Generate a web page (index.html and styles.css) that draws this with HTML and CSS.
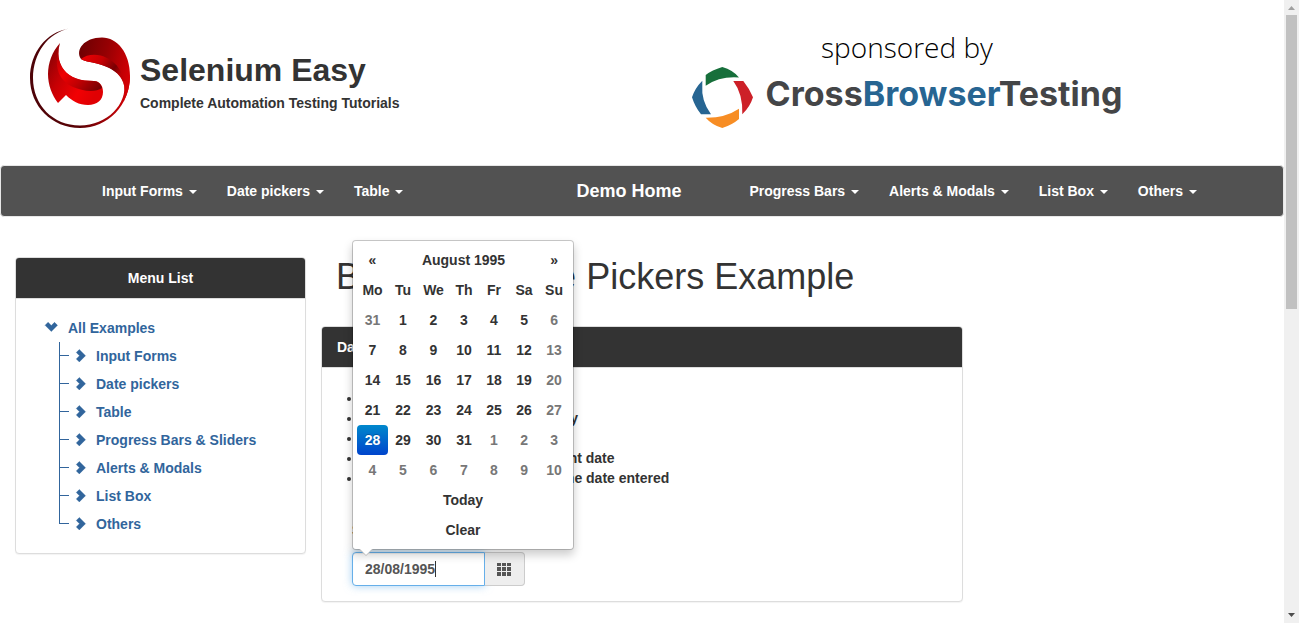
FILE: index.html
```html
<!DOCTYPE html>
<html lang="en">
<head>
<meta charset="utf-8">
<title>Selenium Easy - Bootstrap Date Pickers Example</title>
<link rel="stylesheet" href="styles.css">
</head>
<body>
<svg class="defs" width="0" height="0" aria-hidden="true">
  <symbol id="chevron" viewBox="0 0 14 14"><path d="M4.300 .5 10.500 6.700 4.300 12.900 1.300 9.900 4.500 6.700 1.300 3.500Z" fill="currentColor" stroke="currentColor" stroke-width=".4" stroke-linejoin="round"/></symbol>
</svg>
<div class="page">
  <header class="header">
    <a class="brand" href="#">
      <svg class="brand-logo" viewBox="0 0 100 100" aria-hidden="true">
        <defs>
          <linearGradient id="ring" x1="0" y1="0" x2="1" y2="0"><stop offset="0" stop-color="#4d0308"/><stop offset=".5" stop-color="#5a0205"/><stop offset=".85" stop-color="#b80206"/><stop offset="1" stop-color="#d40004"/></linearGradient>
          <linearGradient id="top" x1="0" y1=".2" x2="1" y2=".5"><stop offset="0" stop-color="#6e0002"/><stop offset=".5" stop-color="#960003"/><stop offset="1" stop-color="#d20004"/></linearGradient>
          <linearGradient id="fold" x1="0" y1="0" x2="1" y2=".5"><stop offset="0" stop-color="#ef0004"/><stop offset=".45" stop-color="#c80003"/><stop offset=".8" stop-color="#780003"/><stop offset="1" stop-color="#c00003"/></linearGradient>
          <linearGradient id="low" x1="0" y1="0" x2="1" y2=".6"><stop offset="0" stop-color="#7a0205"/><stop offset=".4" stop-color="#c60004"/><stop offset=".75" stop-color="#f20003"/><stop offset="1" stop-color="#e00003"/></linearGradient>
          <linearGradient id="lip" x1="0" y1="0" x2="1" y2="1"><stop offset="0" stop-color="#9a0003"/><stop offset=".4" stop-color="#f00003"/><stop offset=".65" stop-color="#c00003"/><stop offset="1" stop-color="#6a0003"/></linearGradient>
        </defs>
        <path fill="url(#ring)" d="M39 .4C16 4 0 25 0 50c0 28 22 50 50 50 28 0 50-23 50-52l-6 6c4 22-17 43.500-44 43.500C23 97.500 3 77 3 50 3 25 18 5 39 .4Z"/>
        <path fill="url(#top)" d="M51 31C45 22 54 9.500 72 9.500c15 0 28 15 28 38.500 0 9-2 17-6 25 1-7 1-13-1-20-5-12-21-17-33-19-4-.7-7-1.700-9-3Z"/>
        <path fill="url(#fold)" d="M51 31c6-5 17-6 26-1 10 5 17 15 17 27-4-15-19-20-34-23-4-.7-7-1.700-9-3Z"/>
        <path fill="url(#low)" d="M30 15c-8 9-12 20-12 31 0 11 4 21 10 29l8-8c6 6 13 10 22 10 9 0 15-5 15-13 0-7-4-11-9-11-13 0-24-3-30-11-6-8-7-17-4-27Z"/>
        <path fill="url(#lip)" d="M30 15c-3 10-2 19 4 27 6 8 17 11 30 11 4 0 7 3 8 7-7 5-20 3-29-1C30 53 22 40 30 15Z"/>
      </svg>
      <span class="brand-text">
        <span class="brand-name">Selenium Easy</span>
        <span class="brand-tag">Complete Automation Testing Tutorials</span>
      </span>
    </a>
    <a class="sponsor" href="#">
      <span class="sponsor-by">sponsored by</span>
      <span class="sponsor-row">
        <svg class="sponsor-logo" viewBox="0 0 61 61" aria-hidden="true">
          <path fill="#176f3b" d="M13.700 18.700V8Q20 3 30.300 0 41 3 47 10.500 28 9 13.700 18.700Z"/>
          <path fill="#cd2028" d="M41.300 14h10Q57 21 61 30.300 58 40 50.300 47.300 51 27 41.300 14Z"/>
          <path fill="#f78d24" d="M47 41.700V52Q40 58 30.300 61 20 58 13.700 50.700 33 51 47 41.700Z"/>
          <path fill="#276592" d="M10.300 13.700V18Q9 34 19 47.300H9Q3 40 0 30.300 3 21 10.300 13.700Z"/>
        </svg>
        <span class="sponsor-name">Cross<span class="sponsor-accent">Browser</span>Testing</span>
      </span>
    </a>
  </header>

  <nav class="navbar">
    <div class="nav-group">
      <a class="nav-link" href="#">Input Forms <span class="caret"></span></a>
      <a class="nav-link" href="#">Date pickers <span class="caret"></span></a>
      <a class="nav-link" href="#">Table <span class="caret"></span></a>
    </div>
    <a class="nav-link nav-home" href="#">Demo Home</a>
    <div class="nav-group">
      <a class="nav-link" href="#">Progress Bars <span class="caret"></span></a>
      <a class="nav-link" href="#">Alerts &amp; Modals <span class="caret"></span></a>
      <a class="nav-link" href="#">List Box <span class="caret"></span></a>
      <a class="nav-link" href="#">Others <span class="caret"></span></a>
    </div>
  </nav>

  <div class="content">
    <aside class="side">
      <section class="panel">
        <div class="panel-heading panel-heading-center">Menu List</div>
        <div class="tree">
          <a class="tree-link" href="#"><svg class="chevron chevron-down" aria-hidden="true"><use href="#chevron"/></svg>All Examples</a>
          <ul class="tree-list">
            <li class="tree-item"><a class="tree-link" href="#"><svg class="chevron" aria-hidden="true"><use href="#chevron"/></svg>Input Forms</a></li>
            <li class="tree-item"><a class="tree-link" href="#"><svg class="chevron" aria-hidden="true"><use href="#chevron"/></svg>Date pickers</a></li>
            <li class="tree-item"><a class="tree-link" href="#"><svg class="chevron" aria-hidden="true"><use href="#chevron"/></svg>Table</a></li>
            <li class="tree-item"><a class="tree-link" href="#"><svg class="chevron" aria-hidden="true"><use href="#chevron"/></svg>Progress Bars &amp; Sliders</a></li>
            <li class="tree-item"><a class="tree-link" href="#"><svg class="chevron" aria-hidden="true"><use href="#chevron"/></svg>Alerts &amp; Modals</a></li>
            <li class="tree-item"><a class="tree-link" href="#"><svg class="chevron" aria-hidden="true"><use href="#chevron"/></svg>List Box</a></li>
            <li class="tree-item"><a class="tree-link" href="#"><svg class="chevron" aria-hidden="true"><use href="#chevron"/></svg>Others</a></li>
          </ul>
        </div>
      </section>
    </aside>

    <main class="main">
      <h1 class="title">Bootstrap Date Pickers Example</h1>
      <section class="panel">
        <div class="panel-heading">Date Example :</div>
        <div class="panel-body">
          <ul class="rules">
            <li>Disable future dates</li>
            <li>Week should begin with Monday</li>
            <li>Disable Sundays</li>
            <li>Today should choose the current date</li>
            <li>The Clear action should clear the date entered</li>
          </ul>
          <div class="field">
            <label class="field-label" for="date">Select date</label>
            <div class="date-group">
              <input class="date-input" id="date" type="text" value="28/08/1995">
              <span class="text-cursor"></span>
              <button class="date-button" type="button" aria-label="Open calendar">
                <svg class="grid-icon" viewBox="0 0 14 14" fill="currentColor" aria-hidden="true"><path d="M0 1h4v3H0zM5 1h4v3H5zM10 1h4v3h-4zM0 5h4v4H0zM5 5h4v4H5zM10 5h4v4h-4zM0 10h4v4H0zM5 10h4v4H5zM10 10h4v4h-4z"/></svg>
              </button>
              <div class="calendar">
                <table class="calendar-table">
                  <colgroup><col class="wide"><col><col class="wide"><col><col><col><col></colgroup>
                  <thead>
                    <tr><th><button type="button">«</button></th><th colspan="5"><button type="button">August 1995</button></th><th><button type="button">»</button></th></tr>
                    <tr><th>Mo</th><th>Tu</th><th>We</th><th>Th</th><th>Fr</th><th>Sa</th><th>Su</th></tr>
                  </thead>
                  <tbody>
                    <tr><td class="muted">31</td><td>1</td><td>2</td><td>3</td><td>4</td><td>5</td><td class="muted">6</td></tr>
                    <tr><td>7</td><td>8</td><td>9</td><td>10</td><td>11</td><td>12</td><td class="muted">13</td></tr>
                    <tr><td>14</td><td>15</td><td>16</td><td>17</td><td>18</td><td>19</td><td class="muted">20</td></tr>
                    <tr><td>21</td><td>22</td><td>23</td><td>24</td><td>25</td><td>26</td><td class="muted">27</td></tr>
                    <tr><td class="active">28</td><td>29</td><td>30</td><td>31</td><td class="muted">1</td><td class="muted">2</td><td class="muted">3</td></tr>
                    <tr><td class="muted">4</td><td class="muted">5</td><td class="muted">6</td><td class="muted">7</td><td class="muted">8</td><td class="muted">9</td><td class="muted">10</td></tr>
                  </tbody>
                  <tfoot>
                    <tr><th colspan="7"><button type="button">Today</button></th></tr>
                    <tr><th colspan="7"><button type="button">Clear</button></th></tr>
                  </tfoot>
                </table>
              </div>
            </div>
          </div>
        </div>
      </section>
    </main>
  </div>
</div>
<div class="scrollbar" aria-hidden="true">
  <svg class="scroll-arrow" viewBox="0 0 15 15"><path fill="#a0a0a0" d="M4 10 7.500 6 11 10Z"/></svg>
  <div class="scroll-track"><div class="scroll-thumb"></div></div>
  <svg class="scroll-arrow" viewBox="0 0 15 15"><path fill="#4d4d4d" d="M4 5 7.500 9 11 5Z"/></svg>
</div>
</body>
</html>
```
FILE: styles.css
```css
* { box-sizing: border-box; }

body {
  margin: 0;
  display: flex;
  min-height: 100vh;
  background: #fff;
  color: #333;
  font: bold 14px/20px "Liberation Sans", Arial, sans-serif;
}

a { color: inherit; text-decoration: none; }
ul { margin: 0; padding: 0; }
button { font: inherit; color: inherit; cursor: pointer; }
.defs { position: absolute; }
.page { flex: 1; min-width: 0; }

/* Header */
.header {
  display: grid;
  grid-template-columns: 530fr 754fr;
  padding: 28px 0 37px;
}
.brand {
  display: flex;
  gap: 10px;
  padding-left: 30px;
}
.brand-logo { width: 100px; height: 100px; }
.brand-text {
  display: flex;
  flex-direction: column;
  padding-top: 24px;
}
.brand-name { font-size: 32px; line-height: 36px; }
.brand-tag { padding-top: 5px; }

.sponsor {
  display: flex;
  flex-direction: column;
  align-items: center;
}
.sponsor-by {
  color: #000;
  font: 300 28px/39px "Open Sans", sans-serif;
}
.sponsor-row {
  display: flex;
  align-items: flex-start;
  gap: 13px;
}
.sponsor-logo { width: 61px; height: 61px; }
.sponsor-name {
  color: #444547;
  font: 700 34px/54px Inter, sans-serif;
}
.sponsor-accent { color: #276592; }

/* Navigation */
.navbar {
  display: grid;
  grid-template-columns: 475fr 173fr 478fr;
  margin: 0 0 40px;
  padding: 0 71px 0 86px;
  border: 1px solid #e7e7e7;
  border-radius: 4px;
  background: #525252;
  color: #fff;
}
.nav-group { display: flex; }
.nav-link { padding: 15px; white-space: nowrap; }
.nav-home { font-size: 18px; }
.caret {
  display: inline-block;
  margin-left: 2px;
  vertical-align: middle;
  border-top: 4px solid;
  border-right: 4px solid transparent;
  border-left: 4px solid transparent;
}

/* Columns */
.content {
  display: grid;
  grid-template-columns: 1fr 2fr 1fr;
  align-items: start;
}
.side { padding: 0 15px; }

.panel {
  border: 1px solid #ddd;
  border-radius: 4px;
  background: #fff;
  box-shadow: 0 1px 1px rgba(0, 0, 0, .05);
}
.panel-heading {
  padding: 10px 15px;
  border-bottom: 1px solid #ddd;
  border-radius: 3px 3px 0 0;
  background: #333;
  color: #fff;
}
.panel-heading-center { text-align: center; }
.panel-body { padding: 20px 30px 15px; }

/* Menu tree */
.tree { padding: 15px 28px; color: #31659c; }
.tree-link {
  display: flex;
  align-items: center;
  gap: 10px;
  line-height: 28px;
}
.chevron { width: 14px; height: 14px; }
.chevron-down { transform: rotate(90deg); }
.tree-list { padding-left: 15px; list-style: none; }
.tree-item {
  display: flex;
  background:
    linear-gradient(#31659c, #31659c) 0 13px / 10px 1px no-repeat,
    linear-gradient(#31659c, #31659c) 0 0 / 1px 100% no-repeat;
}
.tree-item:last-child { background-size: 10px 1px, 1px 14px; }
.tree-item .tree-link { padding-left: 16px; gap: 7px; }

/* Date example */
.title {
  margin: 0 0 29px;
  padding-left: 15px;
  font-size: 36px;
  font-weight: 500;
  line-height: 40px;
}
.rules { padding-left: 10px; }
.field { padding-top: 32px; }
.field-label { display: block; padding-bottom: 12px; }

.date-group {
  position: relative;
  display: flex;
  width: 173px;
}
.date-input {
  flex: 1;
  min-width: 0;
  height: 34px;
  padding: 6px 12px;
  border: 1px solid #66afe9;
  border-radius: 4px 0 0 4px;
  outline: 0;
  background: #fff;
  color: #555;
  font: inherit;
  box-shadow: inset 0 1px 1px rgba(0, 0, 0, .075), 0 0 8px rgba(102, 175, 233, .6);
}
.text-cursor {
  position: absolute;
  top: 9px;
  left: 83px;
  width: 1px;
  height: 16px;
  background: #333;
}
.date-button {
  display: flex;
  align-items: center;
  padding: 6px 13px 6px 12px;
  border: 1px solid #ccc;
  border-left: 0;
  border-radius: 0 4px 4px 0;
  background: #eee;
  color: #555;
}
.grid-icon { width: 14px; height: 14px; }

.calendar {
  position: absolute;
  bottom: calc(100% + 2px);
  left: 0;
  padding: 4px;
  border: 1px solid rgba(0, 0, 0, .2);
  border-radius: 4px;
  background: #fff;
  background-clip: padding-box;
  box-shadow: 0 5px 10px rgba(0, 0, 0, .2);
}
.calendar::before,
.calendar::after {
  content: "";
  position: absolute;
  top: 100%;
  border: solid transparent;
}
.calendar::before {
  left: 6px;
  border-width: 7px 7px 0;
  border-top-color: #bbb;
}
.calendar::after {
  left: 7px;
  border-width: 6px 6px 0;
  border-top-color: #fff;
}
.calendar-table {
  width: 212px;
  table-layout: fixed;
  border-collapse: collapse;
}
.calendar-table col { width: 30px; }
.calendar-table .wide { width: 31px; }
.calendar-table th,
.calendar-table td {
  height: 30px;
  padding: 0;
  text-align: center;
}
.calendar-table button {
  width: 100%;
  padding: 0;
  border: 0;
  background: none;
}
.calendar-table .muted { color: #777; }
.calendar-table .active {
  border-radius: 4px;
  background: linear-gradient(#08c, #04c);
  color: #fff;
  text-shadow: 0 -1px 0 rgba(0, 0, 0, .25);
}

/* Scrollbar */
.scrollbar {
  position: sticky;
  top: 0;
  display: flex;
  flex-direction: column;
  width: 15px;
  height: 100vh;
  background: #f0f0f0;
}
.scroll-arrow { width: 15px; height: 15px; }
.scroll-track { flex: 1; padding: 0 2px; }
.scroll-thumb { height: 49.6%; background: #c1c1c1; }
```
